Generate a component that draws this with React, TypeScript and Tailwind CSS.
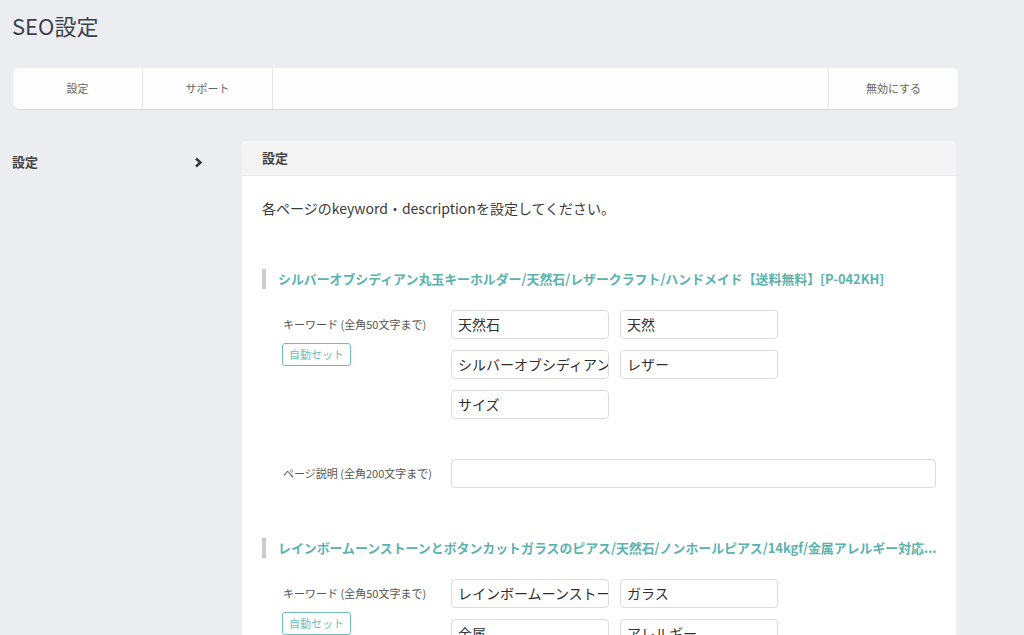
import React from 'react';

const font = { fontFamily: '"Noto Sans CJK JP", "Noto Sans", sans-serif' };

type Product = {
    title: string;
    keywords: string[];
};

const products: Product[] = [
    {
        title: 'シルバーオブシディアン丸玉キーホルダー/天然石/レザークラフト/ハンドメイド【送料無料】[P-042KH]',
        keywords: ['天然石', '天然', 'シルバーオブシディアン', 'レザー', 'サイズ'],
    },
    {
        title: 'レインボームーンストーンとボタンカットガラスのピアス/天然石/ノンホールピアス/14kgf/金属アレルギー対応...',
        keywords: ['レインボームーンストーン', 'ガラス', '金属', 'アレルギー'],
    },
];

const TextBox: React.FC<{ value: string; className?: string }> = ({ value, className }) => (
    <div
        className={
            'h-[29px] rounded-[4px] border border-[#dcdcdc] bg-white pl-[6px] pr-1 flex items-center overflow-hidden whitespace-nowrap text-[14px] text-[#2f2f2f] ' +
            (className ?? 'w-[158px]')
        }
    >
        {value}
    </div>
);

const ProductSection: React.FC<{ product: Product }> = ({ product }) => (
    <div>
        <div className="flex items-center h-[20px]">
            <div className="w-[4px] h-[20px] bg-[#cccccc]" />
            <div className="ml-[12px] text-[12.9px] font-bold text-[#5ab3ae] whitespace-nowrap">
                {product.title}
            </div>
        </div>

        <div className="flex mt-[21px] pl-[21px]">
            <div className="w-[168px] shrink-0">
                <div className="h-[29px] flex items-center text-[11px] text-[#555]">キーワード (全角50文字まで)</div>
                <button className="mt-[4px] ml-[-1px] h-[23px] px-[6px] rounded-[3px] border border-[#6cc0bb] bg-white text-[11px] text-[#6cc0bb]">
                    自動セット
                </button>
            </div>
            <div className="grid grid-cols-[158px_158px] gap-x-[11px] gap-y-[11px]">
                {product.keywords.map((k, i) => (
                    <TextBox key={i} value={k} />
                ))}
            </div>
        </div>

        <div className="flex items-center mt-[40px] pl-[21px]">
            <div className="w-[168px] shrink-0 text-[11px] text-[#555]">ページ説明 (全角200文字まで)</div>
            <TextBox value="" className="w-[485px]" />
        </div>
    </div>
);

const App: React.FC = () => {
    return (
        <div className="min-h-[635px] h-[635px] overflow-hidden bg-[#ecedf1] text-[#333]" style={font}>
            <div className="pl-[12px] pt-[9px]">
                <h1 className="text-[22px] leading-[32px] text-[#3c3f4c] font-normal">SEO設定</h1>
            </div>

            <div className="ml-[13px] mt-[27px] w-[945px] h-[41px] flex bg-[#fdfdfd] rounded-[5px] shadow-[0_1px_1px_rgba(0,0,0,0.08)] text-[11px] text-[#666]">
                <div className="w-[130px] flex items-center justify-center border-r border-[#e6e6e6]">設定</div>
                <div className="w-[130px] flex items-center justify-center border-r border-[#e6e6e6]">サポート</div>
                <div className="flex-1 border-r border-[#e6e6e6]" />
                <div className="w-[129px] flex items-center justify-center">無効にする</div>
            </div>

            <div className="flex mt-[32px]">
                <div className="w-[242px] shrink-0 pl-[12px] pr-[39px] pt-[12px]">
                    <div className="flex items-center justify-between h-[18px]">
                        <span className="text-[13px] font-bold text-[#444]">設定</span>
                        <svg width="9" height="11" viewBox="0 0 9 11">
                            <path d="M2 1.5 L6.5 5.5 L2 9.5" fill="none" stroke="#333" strokeWidth="2.4" />
                        </svg>
                    </div>
                </div>

                <div className="w-[714px] rounded-t-[5px] bg-white overflow-hidden">
                    <div className="h-[35px] bg-[#f4f4f4] border-b border-[#ebebeb] flex items-center pl-[20px] text-[13px] font-bold text-[#444]">
                        設定
                    </div>
                    <div className="pl-[20px] pt-[21px]">
                        <p className="text-[14px] leading-[22px] text-[#3a3a3a]">
                            各ページのkeyword・descriptionを設定してください。
                        </p>
                        <div className="mt-[50px] flex flex-col gap-[50px]">
                            {products.map((p, i) => (
                                <ProductSection key={i} product={p} />
                            ))}
                        </div>
                    </div>
                </div>
            </div>
        </div>
    );
};

export default App;
